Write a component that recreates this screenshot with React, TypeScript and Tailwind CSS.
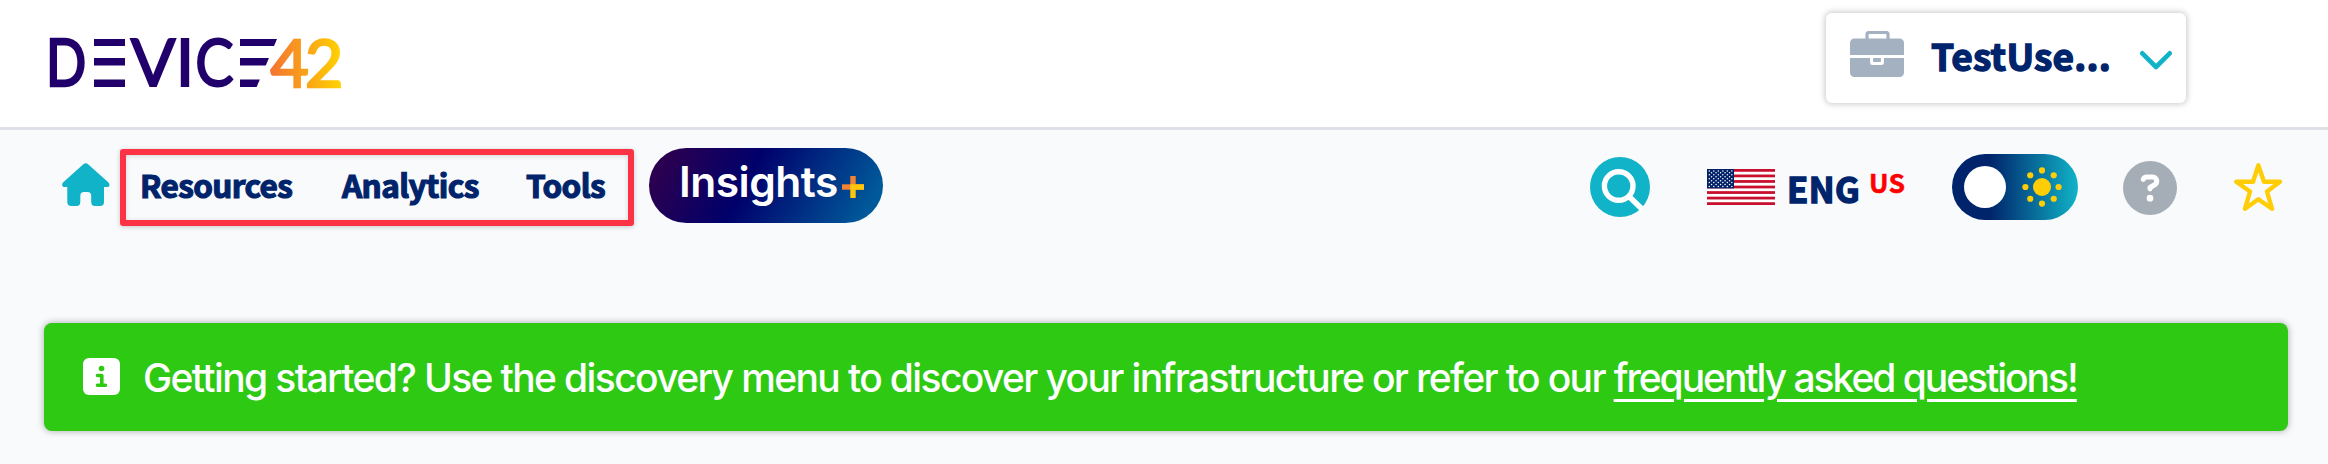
import { FaCircleQuestion } from "react-icons/fa6";

const sourceFont = "font-['Noto_Sans_CJK_JP','Open_Sans',sans-serif] font-bold";

function Logo() {
  return (
    <svg className="ml-[40px] mt-[5px] h-[116px] w-[310px] shrink-0" viewBox="40 5 310 116" role="img" aria-label="Device42">
      <defs>
        <linearGradient id="logo-orange" gradientUnits="userSpaceOnUse" x1="271" y1="0" x2="341" y2="0">
          <stop offset="0" stopColor="#f47432" />
          <stop offset="1" stopColor="#ffd200" />
        </linearGradient>
        <clipPath id="bar-clip">
          <rect x="240" y="30" width="60" height="66" />
        </clipPath>
      </defs>
      <g fill="#21006b" stroke="#21006b" strokeWidth="2" fontFamily="Lato, sans-serif" fontSize="66">
        <text transform="translate(46 86) scale(0.8 1)" strokeWidth="2.6">D</text>
        <text transform="translate(130.8 86)">V</text>
        <text transform="translate(175.7 86)">I</text>
        <text transform="translate(195.3 86) scale(0.87 1)">C</text>
      </g>
      <g fill="#21006b">
        <rect x="94" y="39" width="31" height="7" />
        <rect x="94" y="58" width="31" height="7.5" />
        <rect x="94" y="79.5" width="31" height="7.5" />
        <g clipPath="url(#bar-clip)">
          <g transform="translate(277 39) skewX(-23)">
            <rect x="-60" y="0" width="60" height="7" />
            <rect x="-60" y="19" width="60" height="7.5" />
            <rect x="-60" y="40.5" width="60" height="7.5" />
          </g>
        </g>
      </g>
      <g fill="url(#logo-orange)" stroke="url(#logo-orange)" strokeWidth="2.4" fontFamily="Lato, sans-serif" fontSize="66">
        <text x="270.5" y="86.6">4</text>
        <text x="305" y="86.6">2</text>
      </g>
    </svg>
  );
}

function Flag() {
  return (
    <svg className="h-9 w-[68px]" viewBox="0 0 68 36">
      <rect width="68" height="36" fill="#fff" />
      {[0, 2, 4, 6, 8, 10, 12].map((i) => (
        <rect key={i} y={(i * 36) / 13} width="68" height={36 / 13} fill="#c8102e" />
      ))}
      <rect width="27" height="19.4" fill="#012169" />
      {Array.from({ length: 9 }).flatMap((_, r) =>
        Array.from({ length: r % 2 ? 5 : 6 }).map((_, c) => (
          <circle key={`${r}-${c}`} cx={2.3 + c * 4.5 + (r % 2 ? 2.25 : 0)} cy={1.9 + r * 1.95} r="0.75" fill="#fff" />
        ))
      )}
    </svg>
  );
}

function Account() {
  return (
    <button className="ml-[1476px] mt-[13px] flex h-[90px] w-[360px] shrink-0 items-start rounded-[6px] bg-white pl-6 shadow-[0_0_6px_1px_rgba(0,0,0,0.22)]">
      <svg className="mt-[18px] h-[46px] w-[54px]" viewBox="0 0 54 46">
        <path d="M17 9V3.5a2 2 0 0 1 2-2h17a2 2 0 0 1 2 2V9" fill="none" stroke="#a4b1c0" strokeWidth="3.2" />
        <rect y="7.5" width="54" height="38.5" rx="4.5" fill="#a4b1c0" />
        <path d="M0 25.4H54" stroke="#fff" strokeWidth="3" />
        <rect x="21.6" y="25.5" width="10.8" height="7" rx="1" fill="#a4b1c0" stroke="#fff" strokeWidth="3" />
      </svg>
      <span className={`${sourceFont} ml-[27px] mt-[14px] w-[209px] whitespace-nowrap text-left text-[37px] leading-[56px] tracking-[0.2px] text-[#00246b] [-webkit-text-stroke:1.4px_#00246b]`}>TestUse...</span>
      <svg className="mt-[37px] h-5 w-8" viewBox="0 0 32 20">
        <path d="M2.3 3.3L16 17 29.7 3.3" fill="none" stroke="#10b3c8" strokeWidth="4.6" strokeLinecap="round" strokeLinejoin="round" />
      </svg>
    </button>
  );
}

function NavLinks() {
  return (
    <div className={`${sourceFont} ml-[10px] mt-[19px] flex h-[77px] w-[514px] shrink-0 rounded-[3px] border-[6px] border-[#fb3344] pl-[14px] pt-[9px] text-[31.5px] leading-[40px] tracking-[-0.6px] text-[#00246b] shadow-[0_1px_5px_rgba(0,0,0,0.2),inset_0_1px_5px_rgba(0,0,0,0.15)] [-webkit-text-stroke:1.2px_#00246b]`}>
      <a className="w-[202px]">Resources</a>
      <a className="w-[184px]">Analytics</a>
      <a>Tools</a>
    </div>
  );
}

function Sun() {
  return (
    <svg className="h-10 w-10" viewBox="-20 -20 40 40" fill="#ffcd05">
      <circle r="9" />
      {[0, 1, 2, 3, 4, 5, 6, 7].map((i) => (
        <circle key={i} r="3.1" cx={16.6 * Math.cos((i * Math.PI) / 4)} cy={16.6 * Math.sin((i * Math.PI) / 4)} />
      ))}
    </svg>
  );
}

export default function App() {
  return (
    <div className="h-[464px] w-[2328px] overflow-hidden bg-[#f8fafc]">
      <header className="flex h-[130px] items-start border-b-[3px] border-[#dee1e8] bg-white">
        <Logo />
        <Account />
      </header>
      <nav className="flex h-[193px] items-start">
        <svg className="ml-[62px] mt-[33px] h-[43px] w-[48px] shrink-0" viewBox="0 0 48 43">
          <path d="M21.6 .9Q23.7-.6 25.8 .9L46.5 19.5Q48.6 22.4 46.2 24H42V39Q42 43 38 43H33Q29.2 43 29.2 39V33Q29.2 29 25.5 29H22Q18.3 29 18.3 33V39Q18.3 43 14.5 43H9.5Q5.3 43 5.3 39V24H1.5Q-1 22.4 1 19.5Z" fill="#10b3c8" />
        </svg>
        <NavLinks />
        <div className="ml-[15px] mt-[18px] flex h-[75px] w-[234px] shrink-0 items-start rounded-full bg-[linear-gradient(118deg,#2b0050_8%,#00006b_42%,#00599a_92%)] pl-[30px]">
          <span className="mt-[8px] w-[163px] whitespace-nowrap font-[Inter,sans-serif] text-[42.5px] font-semibold leading-[52px] tracking-[-0.5px] text-white">Insights</span>
          <svg className="mt-[28px] h-[22px] w-[22px] shrink-0" viewBox="0 0 22 22">
            <path d="M0 11H22" stroke="#f58232" strokeWidth="5.4" />
            <path d="M11 0V11" stroke="#f58232" strokeWidth="5.4" />
            <path d="M11 22V11H22" fill="none" stroke="#ffc60b" strokeWidth="5.4" />
          </svg>
        </div>
        <svg className="ml-[707px] mt-[27px] h-[60px] w-[60px] shrink-0" viewBox="0 0 60 60">
          <circle cx="30" cy="30" r="30" fill="#10b3c8" />
          <circle cx="28.7" cy="29" r="14.3" fill="none" stroke="#fff" strokeWidth="5.4" />
          <path d="M39 39.5L52 52" stroke="#fff" strokeWidth="5.6" />
        </svg>
        <div className="ml-[57px] mt-[39px] flex w-[245px] shrink-0 items-start">
          <Flag />
          <span className={`${sourceFont} ml-[12px] -mt-[6px] w-[82px] text-[34.5px] leading-[50px] tracking-[0.5px] text-[#00246b] [-webkit-text-stroke:1.4px_#00246b]`}>ENG</span>
          <span className={`${sourceFont} -mt-[7px] text-[26px] leading-[40px] tracking-[0.6px] text-[#ff0000] [-webkit-text-stroke:0.6px_#ff0000]`}>US</span>
        </div>
        <div className="mt-[24px] flex h-[66px] w-[126px] shrink-0 items-center rounded-full bg-[linear-gradient(90deg,#00246b_30%,#10b3c8_100%)] pl-3">
          <div className="h-[42px] w-[42px] rounded-full bg-white" />
          <div className="ml-4">
            <Sun />
          </div>
        </div>
        <div className="ml-[45px] mt-[31px] h-[54px] w-[54px] shrink-0 rounded-full bg-[radial-gradient(#fff_60%,transparent_61%)]">
          <FaCircleQuestion className="h-[54px] w-[54px] text-[#a5adb7]" />
        </div>
        <svg className="ml-[57px] mt-[33px] h-[50px] w-[50px] shrink-0" viewBox="2234 163 50 50">
          <path d="M2258.3 165.3L2264 181.8H2280L2267 191.5L2272 208.8L2258.3 199.3L2245 208.8L2250 191.5L2236.3 181.8H2253Z" fill="none" stroke="#ffcd05" strokeWidth="4.4" strokeLinejoin="round" />
        </svg>
      </nav>
      <div className="ml-11 flex h-[108px] w-[2244px] items-start rounded-[8px] bg-[#2dc913] pl-[39px] shadow-[0_0_6px_1px_rgba(0,0,0,0.25)]">
        <svg className="mt-[35px] h-[37px] w-[37px] shrink-0" viewBox="0 0 37 37">
          <rect width="37" height="37" rx="6" fill="#fff" />
          <circle cx="18.5" cy="10.5" r="2.8" fill="#2dc913" />
          <path d="M14.5 17.5H18.8V27M14.5 27.3H22.5" fill="none" stroke="#2dc913" strokeWidth="3.6" strokeLinecap="round" strokeLinejoin="round" />
        </svg>
        <p className="ml-[23px] mt-[30px] whitespace-nowrap font-[Inter,sans-serif] text-[39px] font-medium leading-[50px] tracking-[-1.63px] text-white">
          Getting started? Use the discovery menu to discover your infrastructure or refer to our{" "}
          <a className="tracking-[-2.04px] underline decoration-[3px] underline-offset-[7px]">frequently asked questions!</a>
        </p>
      </div>
    </div>
  );
}
